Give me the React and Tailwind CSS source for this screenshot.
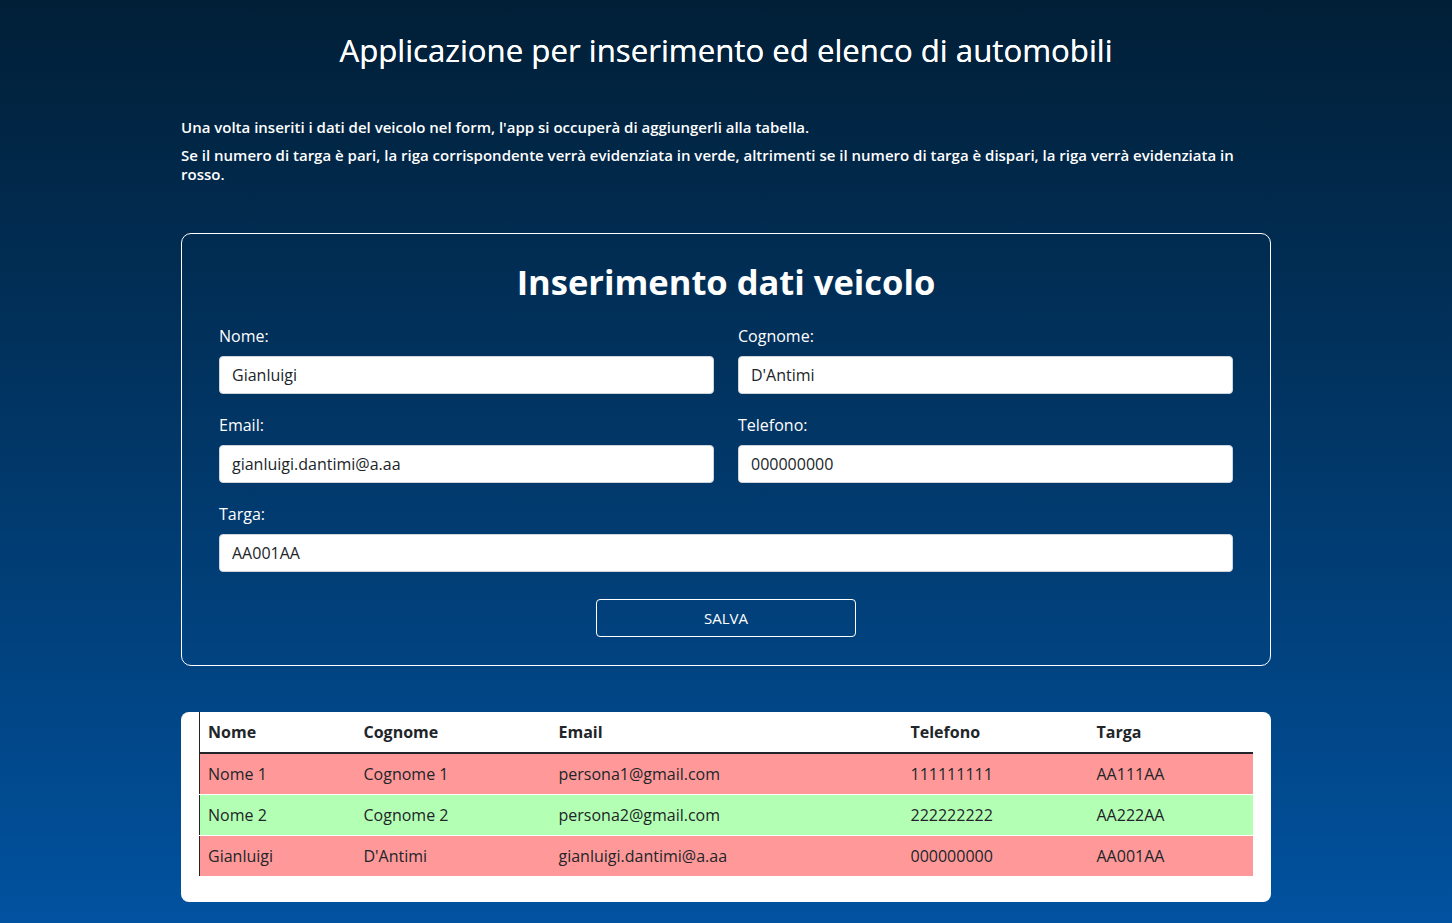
import { useState } from 'react'

const initialCars = [
  { nome: 'Nome 1', cognome: 'Cognome 1', email: 'persona1@gmail.com', telefono: '111111111', targa: 'AA111AA' },
  { nome: 'Nome 2', cognome: 'Cognome 2', email: 'persona2@gmail.com', telefono: '222222222', targa: 'AA222AA' },
  { nome: 'Gianluigi', cognome: "D'Antimi", email: 'gianluigi.dantimi@a.aa', telefono: '000000000', targa: 'AA001AA' },
]

function isEven(targa) {
  const n = parseInt(targa.replace(/\D/g, ''), 10)
  return n % 2 === 0
}

export default function App() {
  const [form, setForm] = useState({ nome: 'Gianluigi', cognome: "D'Antimi", email: 'gianluigi.dantimi@a.aa', telefono: '000000000', targa: 'AA001AA' })
  const [cars, setCars] = useState(initialCars)

  const handleSave = (e) => {
    e.preventDefault()
    setCars([...cars, form])
  }

  const inp = `w-full h-[38px] bg-white border border-[#ced4da] rounded-[4px] px-[12px] text-[16px] text-[#212529] outline-none`
  const lbl = `block text-white text-[16px] leading-[24px] mb-[8px]`

  return (
    <div className="min-h-[923px] bg-gradient-to-b from-[#011f37] to-[#0152a0] font-['Open_Sans',sans-serif] pb-[21px]">
      <div className="w-[1090px] mx-auto">
        <h1 className="text-white text-[31.2px] leading-[40px] text-center pt-[30px] [text-shadow:0_0_0.4px_#fff]">
          Applicazione per inserimento ed elenco di automobili
        </h1>

        <div className="mt-[48px] text-white font-semibold text-[15px] leading-[19px]">
          <p className="mb-[9px]">Una volta inseriti i dati del veicolo nel form, l'app si occuperà di aggiungerli alla tabella.</p>
          <p>Se il numero di targa è pari, la riga corrispondente verrà evidenziata in verde, altrimenti se il numero di targa è dispari, la riga verrà evidenziata in rosso.</p>
        </div>

        <form onSubmit={handleSave} className="mt-[49px] border border-white rounded-[10px] px-[37px] pt-[26px] pb-[28px]">
          <h2 className="text-white font-bold text-[34.5px] leading-[44px] text-center mb-[20px]">Inserimento dati veicolo</h2>
          <div className="grid grid-cols-2 gap-x-[24px] gap-y-[19px]">
            <div><label className={lbl}>Nome:</label><input className={inp} value={form.nome} onChange={e => setForm({ ...form, nome: e.target.value })} /></div>
            <div><label className={lbl}>Cognome:</label><input className={inp} value={form.cognome} onChange={e => setForm({ ...form, cognome: e.target.value })} /></div>
            <div><label className={lbl}>Email:</label><input className={inp} value={form.email} onChange={e => setForm({ ...form, email: e.target.value })} /></div>
            <div><label className={lbl}>Telefono:</label><input className={inp} value={form.telefono} onChange={e => setForm({ ...form, telefono: e.target.value })} /></div>
            <div className="col-span-2"><label className={lbl}>Targa:</label><input className={inp} value={form.targa} onChange={e => setForm({ ...form, targa: e.target.value })} /></div>
          </div>
          <div className="flex justify-center mt-[27px]">
            <button type="submit" className="w-[260px] h-[38px] border border-white rounded-[4px] text-white text-[15px]">SALVA</button>
          </div>
        </form>

        <div className="mt-[46px] bg-white rounded-[8px] px-[18px] pb-[25px]">
          <table className="w-full border-l border-[#212529] text-[16px] text-[#212529] border-collapse">
            <thead>
              <tr className="border-b-2 border-[#212529]">
                {[['Nome', 'w-[156px]'], ['Cognome', 'w-[195px]'], ['Email', 'w-[352px]'], ['Telefono', 'w-[186px]'], ['Targa', '']].map(([h, w]) => (
                  <th key={h} className={`${w} px-[8px] h-[41px] text-left font-bold`}>{h}</th>
                ))}
              </tr>
            </thead>
            <tbody>
              {cars.map((c, i) => (
                <tr key={i} className={`${isEven(c.targa) ? 'bg-[#b3ffb3]' : 'bg-[#ff9999]'} border-b border-white`}>
                  <td className="px-[8px] h-[41px]">{c.nome}</td>
                  <td className="px-[8px] h-[41px]">{c.cognome}</td>
                  <td className="px-[8px] h-[41px]">{c.email}</td>
                  <td className="px-[8px] h-[41px]">{c.telefono}</td>
                  <td className="px-[8px] h-[41px]">{c.targa}</td>
                </tr>
              ))}
            </tbody>
          </table>
        </div>
      </div>
    </div>
  )
}
